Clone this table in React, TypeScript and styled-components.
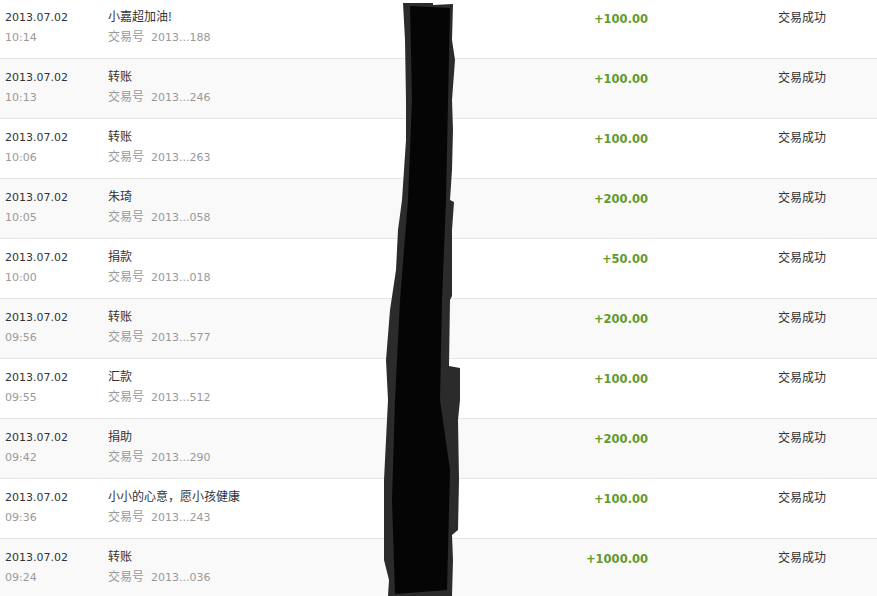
import React from "react";
import styled, { createGlobalStyle } from "styled-components";

const GlobalStyle = createGlobalStyle`
  body {
    margin: 0;
    background: #fff;
    font-family: "DejaVu Sans", "Noto Sans CJK SC", sans-serif;
    overflow: hidden;
  }
`;

const Page = styled.div`
  position: relative;
  width: 877px;
  height: 596px;
  overflow: hidden;
`;

const List = styled.div`
  display: flex;
  flex-direction: column;
  margin-top: -1px;
`;

const Row = styled.div<{ $alt: boolean }>`
  display: grid;
  grid-template-columns: 103px 434px 106px 130px 1fr;
  padding: 9px 0 0 5px;
  box-sizing: border-box;
  height: 60px;
  border-bottom: 1px solid #e6e6e6;
  background: ${(p) => (p.$alt ? "#f9f9f9" : "#fff")};
`;

const Cell = styled.div<{ $shift?: number }>`
  display: flex;
  flex-direction: column;
  margin-top: ${(p) => -(p.$shift ?? 0)}px;
`;

const DateText = styled.span`
  font-family: "DejaVu Sans", sans-serif;
  font-size: 11px;
  line-height: 20px;
  color: #333;
`;

const TimeText = styled(DateText)`
  color: #999;
`;

const Title = styled.span`
  font-family: "Noto Sans CJK SC", sans-serif;
  font-size: 12px;
  line-height: 20px;
  color: #333;
`;

const TradeNo = styled.span`
  display: flex;
  align-items: baseline;
  gap: 7px;
  line-height: 20px;
  color: #999;
`;

const TradeLabel = styled.span`
  font-family: "Noto Sans CJK SC", sans-serif;
  font-size: 12px;
`;

const TradeNum = styled.span`
  font-family: "DejaVu Sans", sans-serif;
  font-size: 11px;
`;

const Amount = styled.span`
  font-family: "DejaVu Sans", sans-serif;
  font-weight: bold;
  font-size: 11.5px;
  line-height: 20px;
  padding-top: 1px;
  color: #5f9a2a;
  text-align: right;
`;

const Status = styled.span`
  font-family: "Noto Sans CJK SC", sans-serif;
  font-size: 12px;
  line-height: 20px;
  color: #333;
`;

const Redaction = styled.svg`
  position: absolute;
  left: 0;
  top: 0;
  pointer-events: none;
`;

const records = [
  { time: "10:14", title: "小嘉超加油!", no: "2013...188", amount: "+100.00" },
  { time: "10:13", title: "转账", no: "2013...246", amount: "+100.00" },
  { time: "10:06", title: "转账", no: "2013...263", amount: "+100.00" },
  { time: "10:05", title: "朱琦", no: "2013...058", amount: "+200.00" },
  { time: "10:00", title: "捐款", no: "2013...018", amount: "+50.00" },
  { time: "09:56", title: "转账", no: "2013...577", amount: "+200.00" },
  { time: "09:55", title: "汇款", no: "2013...512", amount: "+100.00" },
  { time: "09:42", title: "捐助", no: "2013...290", amount: "+200.00" },
  { time: "09:36", title: "小小的心意，愿小孩健康", no: "2013...243", amount: "+100.00" },
  { time: "09:24", title: "转账", no: "2013...036", amount: "+1000.00" },
];

const outer =
  "403,3 433,3 433,5 453,4 452,40 455,60 452,100 453,130 452,170 450,200 454,202 452,230 452,296 450,300 449,366 460,368 460,400 458,420 459,480 458,530 452,535 453,560 452,596 388,596 389,580 384,560 384,480 386,440 388,400 386,360 390,310 396,270 398,230 402,200 406,140 406,100 405,40";
const inner =
  "410,6 450,8 448,100 446,200 442,300 440,400 450,470 447,590 395,594 392,500 395,400 400,300 408,200 412,100";

const App = () => {
  return (
    <Page>
      <GlobalStyle />
      <List>
        {records.map((r, i) => (
          <Row key={i} $alt={i % 2 === 1}>
            <Cell>
              <DateText>2013.07.02</DateText>
              <TimeText>{r.time}</TimeText>
            </Cell>
            <Cell $shift={2}>
              <Title>{r.title}</Title>
              <TradeNo>
                <TradeLabel>交易号</TradeLabel>
                <TradeNum>{r.no}</TradeNum>
              </TradeNo>
            </Cell>
            <Amount>{r.amount}</Amount>
            <div />
            <Cell $shift={1}>
              <Status>交易成功</Status>
            </Cell>
          </Row>
        ))}
      </List>
      <Redaction width="877" height="596" viewBox="0 0 877 596">
        <polygon points={outer} fill="#2b2b2b" />
        <polygon points={inner} fill="#050505" />
      </Redaction>
    </Page>
  );
};

export default App;
